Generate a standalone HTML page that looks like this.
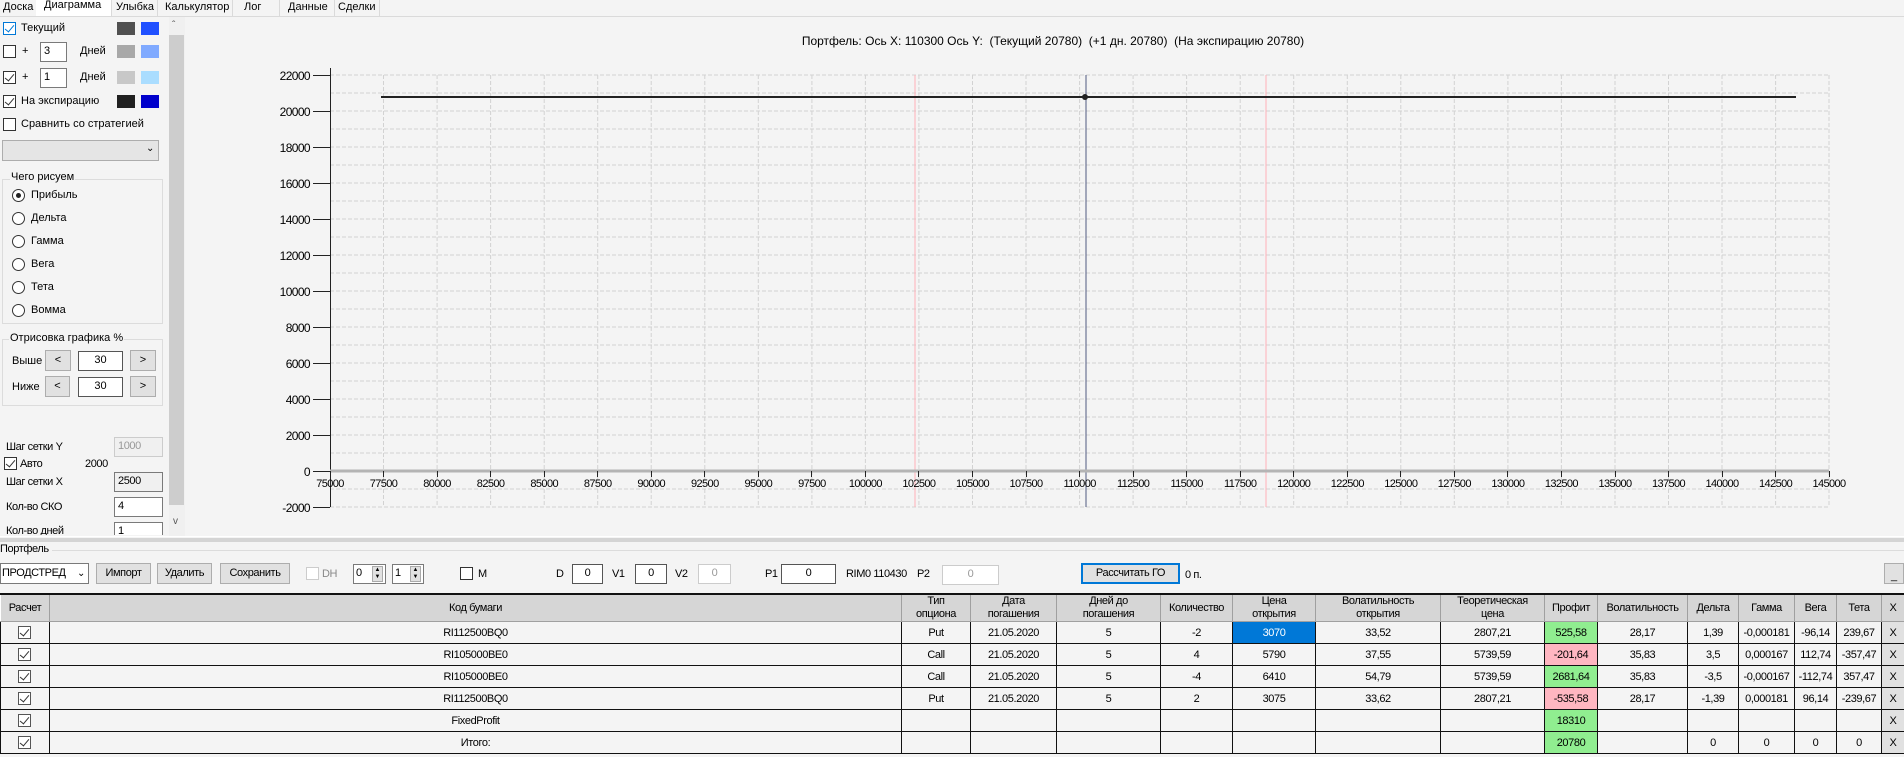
<!DOCTYPE html>
<html><head><meta charset="utf-8">
<style>
*{box-sizing:border-box;margin:0;padding:0}
body{width:1904px;height:757px;background:#f4f4f4;position:relative;overflow:hidden;font-family:"Liberation Sans",sans-serif;font-size:11px;color:#000}
.a{position:absolute;white-space:nowrap}
.n{font-family:"Liberation Sans",sans-serif;font-size:11px;letter-spacing:-0.4px}
.cb{position:absolute;width:13px;height:13px;border:1px solid #333;background:#fff}
.cb.c::after{content:"";position:absolute;left:3px;top:0px;width:4px;height:8px;border:solid #333;border-width:0 1px 1px 0;transform:rotate(40deg)}
.cb.blue{border-color:#0078d7}.cb.blue::after{border-color:#0078d7}
.rd{position:absolute;width:13px;height:13px;border:1px solid #333;border-radius:50%;background:#fff}
.rd.s::after{content:"";position:absolute;left:3px;top:3px;width:5px;height:5px;border-radius:50%;background:#222}
.inp{position:absolute;border:1px solid #7a7a7a;background:#fff;height:20px;padding:2px 3px}
.btn{position:absolute;background:#e1e1e1;border:1px solid #adadad;text-align:center;line-height:19px;height:21px}
.sw{position:absolute;width:18px;height:13px}
.grp{position:absolute;border:1px solid #dcdcdc}
.tab{position:absolute;top:0;height:16px;line-height:15px;padding:0 3px;border-right:1px solid #dadada}
table{position:absolute;left:0;top:593px;border-collapse:collapse;table-layout:fixed;width:1904px;border-top:2px solid #111}
td{height:22px;border:1px solid #111;text-align:center;font-family:"Liberation Sans",sans-serif;font-size:11px;letter-spacing:-0.4px;background:#f4f4f4;overflow:hidden;white-space:nowrap;padding:0 1px;position:relative}
th{height:27px;background:#d6d6d6;border-left:1px solid #fff;border-right:1px solid #a0a0a0;border-bottom:1px solid #a0a0a0;font-weight:normal;font-family:"Liberation Sans",sans-serif;font-size:11px;letter-spacing:-0.4px;line-height:13px;overflow:hidden;white-space:nowrap}
td .cb{left:17px;top:4px;border-color:#555}
.g{background:#90ee90}.p{background:#ffb6c1}.bl{background:#0078d7;color:#fff}
.x{background:#e1e1e1}
svg text{letter-spacing:-0.6px}
</style></head><body>

<div class="tab" style="left:0">Доска</div>
<div class="tab" style="left:36px;width:76px;background:#fff;top:-2px;height:18px;padding-left:8px">Диаграмма</div>
<div class="tab" style="left:113px">Улыбка</div>
<div class="tab" style="left:162px">Калькулятор</div>
<div class="tab" style="left:238px;width:42px;padding-left:6px">Лог</div>
<div class="tab" style="left:280px;width:55px;padding-left:8px">Данные</div>
<div class="tab" style="left:335px">Сделки</div>
<div class="a" style="left:0;top:16px;width:1904px;height:1px;background:#dadada"></div>

<div class="cb c blue" style="left:3px;top:22px"></div><div class="a" style="left:21px;top:22px">Текущий</div>
<div class="sw" style="left:117px;top:22px;background:#505050"></div><div class="sw" style="left:141px;top:22px;background:#2050ff"></div>
<div class="cb" style="left:3px;top:45px"></div><div class="a" style="left:22px;top:45px">+</div>
<div class="inp" style="left:40px;top:42px;width:27px">3</div><div class="a" style="left:80px;top:45px">Дней</div>
<div class="sw" style="left:117px;top:45px;background:#a8a8a8"></div><div class="sw" style="left:141px;top:45px;background:#80aaff"></div>
<div class="cb c" style="left:3px;top:71px"></div><div class="a" style="left:22px;top:71px">+</div>
<div class="inp" style="left:40px;top:68px;width:27px">1</div><div class="a" style="left:80px;top:71px">Дней</div>
<div class="sw" style="left:117px;top:71px;background:#c8c8c8"></div><div class="sw" style="left:141px;top:71px;background:#aaddff"></div>
<div class="cb c" style="left:3px;top:95px"></div><div class="a" style="left:21px;top:95px">На экспирацию</div>
<div class="sw" style="left:117px;top:95px;background:#202020"></div><div class="sw" style="left:141px;top:95px;background:#0000cc"></div>
<div class="cb" style="left:3px;top:118px"></div><div class="a" style="left:21px;top:118px">Сравнить со стратегией</div>
<div class="a" style="left:2px;top:140px;width:157px;height:21px;background:#e5e5e5;border:1px solid #adadad"></div>
<div class="a" style="left:146px;top:143px;font-size:10px">&#8964;</div>

<div class="grp" style="left:2px;top:179px;width:161px;height:145px"></div>
<div class="a" style="left:10px;top:171px;background:#f4f4f4;padding:0 1px">Чего рисуем</div>
<div class="rd s" style="left:12px;top:189px"></div><div class="a" style="left:31px;top:189px">Прибыль</div>
<div class="rd" style="left:12px;top:212px"></div><div class="a" style="left:31px;top:212px">Дельта</div>
<div class="rd" style="left:12px;top:235px"></div><div class="a" style="left:31px;top:235px">Гамма</div>
<div class="rd" style="left:12px;top:258px"></div><div class="a" style="left:31px;top:258px">Вега</div>
<div class="rd" style="left:12px;top:281px"></div><div class="a" style="left:31px;top:281px">Тета</div>
<div class="rd" style="left:12px;top:304px"></div><div class="a" style="left:31px;top:304px">Вомма</div>

<div class="grp" style="left:2px;top:339px;width:161px;height:67px"></div>
<div class="a" style="left:9px;top:332px;background:#f4f4f4;padding:0 1px">Отрисовка графика %</div>
<div class="a" style="left:12px;top:355px">Выше</div>
<div class="btn" style="left:45px;top:350px;width:26px">&lt;</div>
<div class="inp" style="left:78px;top:351px;width:45px;text-align:center;border-color:#555">30</div>
<div class="btn" style="left:130px;top:350px;width:26px">&gt;</div>
<div class="a" style="left:12px;top:381px">Ниже</div>
<div class="btn" style="left:45px;top:376px;width:25px">&lt;</div>
<div class="inp" style="left:78px;top:377px;width:45px;text-align:center;border-color:#555">30</div>
<div class="btn" style="left:130px;top:376px;width:26px">&gt;</div>

<div class="a n" style="left:6px;top:441px">Шаг сетки Y</div>
<div class="inp n" style="left:114px;top:437px;width:49px;background:#f0f0f0;border-color:#ccc;color:#999">1000</div>
<div class="cb c" style="left:4px;top:457px"></div><div class="a n" style="left:20px;top:458px">Авто</div>
<div class="a n" style="left:85px;top:458px">2000</div>
<div class="a n" style="left:6px;top:476px">Шаг сетки X</div>
<div class="inp n" style="left:114px;top:472px;width:49px;background:#f0f0f0">2500</div>
<div class="a n" style="left:6px;top:501px">Кол-во СКО</div>
<div class="inp n" style="left:114px;top:497px;width:49px">4</div>
<div class="a n" style="left:6px;top:525px;height:10px;overflow:hidden">Кол-во дней</div>
<div class="inp n" style="left:114px;top:522px;width:49px;height:13px;border-bottom:none">1</div>
<div class="a" style="left:169px;top:17px;width:16px;height:519px;background:#f0f0f0"></div>
<div class="a" style="left:169px;top:35px;width:15px;height:470px;background:#cdcdcd"></div>
<div class="a" style="left:172px;top:20px;font-size:10px;color:#555">&#710;</div>
<div class="a" style="left:173px;top:516px;font-size:10px;color:#555">v</div>

<div class="a" style="left:0;top:34px;width:2106px;text-align:center;font-size:12px">Портфель: Ось X: 110300 Ось Y:&nbsp; (Текущий 20780)&nbsp; (+1 дн. 20780)&nbsp; (На экспирацию 20780)</div>
<svg class="a" style="left:0;top:0" width="1904" height="540" font-family="Liberation Sans, sans-serif" font-size="12">
<path stroke="#d2d2d2" stroke-dasharray="4 2" fill="none" d="M330 75H1829M330 93H1829M330 111H1829M330 129H1829M330 147H1829M330 165H1829M330 183H1829M330 201H1829M330 219H1829M330 237H1829M330 255H1829M330 273H1829M330 291H1829M330 309H1829M330 327H1829M330 345H1829M330 363H1829M330 381H1829M330 399H1829M330 417H1829M330 435H1829M330 453H1829M330 489H1829M330 507H1829
M383.5 75V507M437.1 75V507M490.6 75V507M544.2 75V507M597.7 75V507M651.2 75V507M704.8 75V507M758.3 75V507M811.9 75V507M865.4 75V507M918.9 75V507M972.5 75V507M1026 75V507M1079.6 75V507M1133.1 75V507M1186.6 75V507M1240.2 75V507M1293.7 75V507M1347.3 75V507M1400.8 75V507M1454.3 75V507M1507.9 75V507M1561.4 75V507M1615 75V507M1668.5 75V507M1722 75V507M1775.6 75V507M1829 75V507"/>
<line x1="915" y1="75" x2="915" y2="507" stroke="#ffb0b8"/>
<line x1="1266" y1="75" x2="1266" y2="507" stroke="#ffb0b8"/>
<line x1="1086" y1="75" x2="1086" y2="507" stroke="#505a80"/>
<line x1="330.5" y1="68" x2="330.5" y2="507" stroke="#222"/>
<line x1="330" y1="471" x2="1829" y2="471" stroke="#b4b4b4" stroke-width="3"/>
<path stroke="#222" d="M313 75.5H330M313 111.5H330M313 147.5H330M313 183.5H330M313 219.5H330M313 255.5H330M313 291.5H330M313 327.5H330M313 363.5H330M313 399.5H330M313 435.5H330M313 471.5H330M313 507.5H330
M330.5 471V477M383.5 471V477M437.5 471V477M490.5 471V477M544.5 471V477M597.5 471V477M651.5 471V477M704.5 471V477M758.5 471V477M811.5 471V477M865.5 471V477M918.5 471V477M972.5 471V477M1026.5 471V477M1079.5 471V477M1133.5 471V477M1186.5 471V477M1240.5 471V477M1293.5 471V477M1347.5 471V477M1400.5 471V477M1454.5 471V477M1507.5 471V477M1561.5 471V477M1615.5 471V477M1668.5 471V477M1722.5 471V477M1775.5 471V477M1829.5 471V477"/>
<line x1="381" y1="97" x2="1796" y2="97" stroke="#222" stroke-width="2"/>
<circle cx="1085" cy="97" r="3" fill="#222"/>
<g text-anchor="end">
<text x="310" y="80">22000</text><text x="310" y="116">20000</text><text x="310" y="152">18000</text><text x="310" y="188">16000</text><text x="310" y="224">14000</text><text x="310" y="260">12000</text><text x="310" y="296">10000</text><text x="310" y="332">8000</text><text x="310" y="368">6000</text><text x="310" y="404">4000</text><text x="310" y="440">2000</text><text x="310" y="476">0</text><text x="310" y="512">-2000</text>
</g>
<g text-anchor="middle" font-size="11">
<text x="330" y="487">75000</text><text x="383.5" y="487">77500</text><text x="437" y="487">80000</text><text x="490.6" y="487">82500</text><text x="544.2" y="487">85000</text><text x="597.7" y="487">87500</text><text x="651.2" y="487">90000</text><text x="704.8" y="487">92500</text><text x="758.3" y="487">95000</text><text x="811.9" y="487">97500</text><text x="865.4" y="487">100000</text><text x="918.9" y="487">102500</text><text x="972.5" y="487">105000</text><text x="1026" y="487">107500</text><text x="1079.6" y="487">110000</text><text x="1133.1" y="487">112500</text><text x="1186.6" y="487">115000</text><text x="1240.2" y="487">117500</text><text x="1293.7" y="487">120000</text><text x="1347.3" y="487">122500</text><text x="1400.8" y="487">125000</text><text x="1454.3" y="487">127500</text><text x="1507.9" y="487">130000</text><text x="1561.4" y="487">132500</text><text x="1615" y="487">135000</text><text x="1668.5" y="487">137500</text><text x="1722" y="487">140000</text><text x="1775.6" y="487">142500</text><text x="1829" y="487">145000</text>
</g>
</svg>

<div class="a" style="left:0;top:536px;width:1904px;height:1px;background:#fff"></div>
<div class="a" style="left:0;top:538px;width:1904px;height:4px;background:#d4d4d4"></div>
<div class="a n" style="left:0;top:543px">Портфель</div>
<div class="a" style="left:52px;top:550px;width:1852px;height:1px;background:#dcdcdc"></div>

<div class="a n" style="left:0;top:563px;width:89px;height:21px;border:1px solid #7a7a7a;background:#fff;line-height:19px;padding-left:1px">ПРОДСТРЕД <span style="position:absolute;right:3px;font-size:10px">&#8964;</span></div>
<div class="btn n" style="left:96px;top:563px;width:55px">Импорт</div>
<div class="btn n" style="left:157px;top:563px;width:55px">Удалить</div>
<div class="btn n" style="left:220px;top:563px;width:70px">Сохранить</div>
<div class="cb" style="left:306px;top:567px;border-color:#ccc"></div><div class="a n" style="left:322px;top:568px;color:#888">DH</div>
<div class="inp n" style="left:353px;top:564px;width:33px;height:20px;padding:2px 2px">0</div>
<div class="a" style="left:372px;top:566px;width:11px;height:16px;background:#e1e1e1;border:1px solid #aaa;font-size:6px;text-align:center;line-height:7px">▲<br>▼</div>
<div class="inp n" style="left:392px;top:564px;width:32px;height:20px;padding:2px 2px">1</div>
<div class="a" style="left:410px;top:566px;width:11px;height:16px;background:#e1e1e1;border:1px solid #aaa;font-size:6px;text-align:center;line-height:7px">▲<br>▼</div>
<div class="cb" style="left:460px;top:567px"></div><div class="a n" style="left:478px;top:568px">M</div>
<div class="a n" style="left:556px;top:568px">D</div>
<div class="inp n" style="left:572px;top:564px;width:31px;text-align:center;border-color:#555">0</div>
<div class="a n" style="left:612px;top:568px">V1</div>
<div class="inp n" style="left:635px;top:564px;width:32px;text-align:center;border-color:#555">0</div>
<div class="a n" style="left:675px;top:568px">V2</div>
<div class="inp n" style="left:698px;top:564px;width:33px;text-align:center;border-color:#ccc;color:#999">0</div>
<div class="a n" style="left:765px;top:568px">P1</div>
<div class="inp n" style="left:781px;top:564px;width:55px;text-align:center;border-color:#555">0</div>
<div class="a n" style="left:846px;top:568px">RIM0 110430</div>
<div class="a n" style="left:917px;top:568px">P2</div>
<div class="inp n" style="left:942px;top:565px;width:57px;text-align:center;border-color:#ccc;color:#999">0</div>
<div class="btn n" style="left:1081px;top:563px;width:99px;border:2px solid #0078d7;line-height:17px">Рассчитать ГО</div>
<div class="a n" style="left:1185px;top:569px">0 п.</div>
<div class="btn" style="left:1884px;top:563px;width:20px;line-height:24px">_</div>

<table>
<colgroup><col style="width:49px"><col style="width:852px"><col style="width:69px"><col style="width:86px"><col style="width:104px"><col style="width:72px"><col style="width:83px"><col style="width:125px"><col style="width:104px"><col style="width:53px"><col style="width:90px"><col style="width:51px"><col style="width:56px"><col style="width:42px"><col style="width:45px"><col style="width:23px"></colgroup>
<tr><th>Расчет</th><th>Код бумаги</th><th>Тип<br>опциона</th><th>Дата<br>погашения</th><th>Дней до<br>погашения</th><th>Количество</th><th>Цена<br>открытия</th><th>Волатильность<br>открытия</th><th>Теоретическая<br>цена</th><th>Профит</th><th>Волатильность</th><th>Дельта</th><th>Гамма</th><th>Вега</th><th>Тета</th><th>X</th></tr>
<tr><td><span class="cb c"></span></td><td>RI112500BQ0</td><td>Put</td><td>21.05.2020</td><td>5</td><td>-2</td><td class="bl">3070</td><td>33,52</td><td>2807,21</td><td class="g">525,58</td><td>28,17</td><td>1,39</td><td>-0,000181</td><td>-96,14</td><td>239,67</td><td class="x">X</td></tr>
<tr><td><span class="cb c"></span></td><td>RI105000BE0</td><td>Call</td><td>21.05.2020</td><td>5</td><td>4</td><td>5790</td><td>37,55</td><td>5739,59</td><td class="p">-201,64</td><td>35,83</td><td>3,5</td><td>0,000167</td><td>112,74</td><td>-357,47</td><td class="x">X</td></tr>
<tr><td><span class="cb c"></span></td><td>RI105000BE0</td><td>Call</td><td>21.05.2020</td><td>5</td><td>-4</td><td>6410</td><td>54,79</td><td>5739,59</td><td class="g">2681,64</td><td>35,83</td><td>-3,5</td><td>-0,000167</td><td>-112,74</td><td>357,47</td><td class="x">X</td></tr>
<tr><td><span class="cb c"></span></td><td>RI112500BQ0</td><td>Put</td><td>21.05.2020</td><td>5</td><td>2</td><td>3075</td><td>33,62</td><td>2807,21</td><td class="p">-535,58</td><td>28,17</td><td>-1,39</td><td>0,000181</td><td>96,14</td><td>-239,67</td><td class="x">X</td></tr>
<tr><td><span class="cb c"></span></td><td>FixedProfit</td><td></td><td></td><td></td><td></td><td></td><td></td><td></td><td class="g">18310</td><td></td><td></td><td></td><td></td><td></td><td class="x">X</td></tr>
<tr><td><span class="cb c"></span></td><td>Итого:</td><td></td><td></td><td></td><td></td><td></td><td></td><td></td><td class="g">20780</td><td></td><td>0</td><td>0</td><td>0</td><td>0</td><td class="x">X</td></tr>
</table>
</body></html>
